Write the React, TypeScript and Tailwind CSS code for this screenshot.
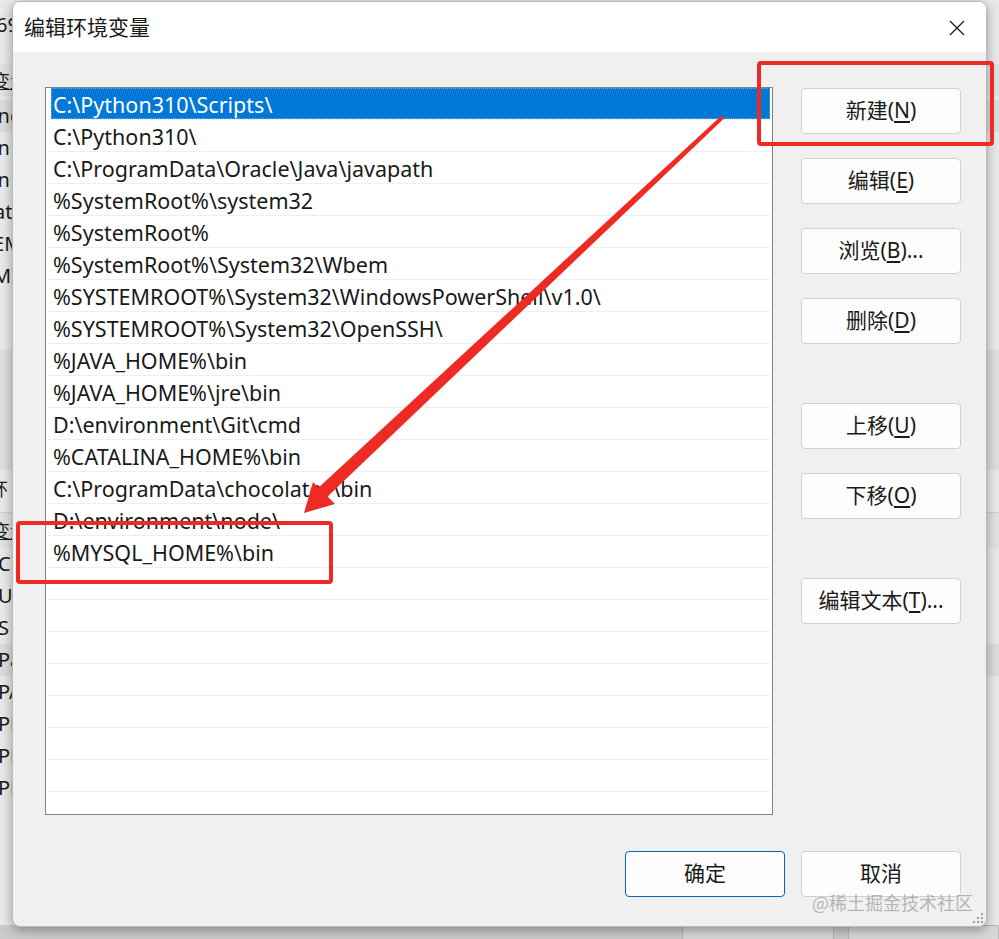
import React from "react";

const FONT = { fontFamily: '"Noto Sans", "Noto Sans CJK SC", sans-serif' };
const CJK = { fontFamily: '"Noto Sans CJK SC", sans-serif' };

const PATHS = [
  "C:\\Python310\\Scripts\\",
  "C:\\Python310\\",
  "C:\\ProgramData\\Oracle\\Java\\javapath",
  "%SystemRoot%\\system32",
  "%SystemRoot%",
  "%SystemRoot%\\System32\\Wbem",
  "%SYSTEMROOT%\\System32\\WindowsPowerShell\\v1.0\\",
  "%SYSTEMROOT%\\System32\\OpenSSH\\",
  "%JAVA_HOME%\\bin",
  "%JAVA_HOME%\\jre\\bin",
  "D:\\environment\\Git\\cmd",
  "%CATALINA_HOME%\\bin",
  "C:\\ProgramData\\chocolatey\\bin",
  "D:\\environment\\node\\",
  "%MYSQL_HOME%\\bin",
];

const ROWS = 22;

// the 环境变量 window behind the dialog, only its left edge peeks out
const BACK_TOP = ["One", "On", "On", "Pat", "TEM", "TM"];
const BACK_BOTTOM = ["C", "U", "S", "Pat", "PA", "PR", "PR", "PR"];

function Btn({ label, hot, tail = "", primary = false }: { label: string; hot?: string; tail?: string; primary?: boolean }) {
  return (
    <button
      className={`flex h-[46px] w-[160px] items-center justify-center rounded-[4px] bg-[#fdfdfd] text-[21px] text-[#1a1a1a] ${
        primary ? "border border-[#0067c0]" : "border border-[#d1d1d1]"
      }`}
      style={FONT}
    >
      {label}
      {hot && (
        <>
          (<span className="underline underline-offset-[3px]">{hot}</span>){tail}
        </>
      )}
    </button>
  );
}

function BackWindow() {
  return (
    <div className="flex h-full w-full flex-col text-[20px] text-[#1a1a1a]">
      <div className="-ml-[4px] h-[64px] pt-[10px] leading-[30px]">69</div>
      <div className="flex h-[32px] items-center bg-[#e2e2e2] -indent-[8px] text-[18px] underline" style={CJK}>变量</div>
      <div className="flex flex-col pt-[4px]">
        {BACK_TOP.map((t, i) => (
          <div key={i} className={`h-[32px] -indent-[18px] leading-[32px] ${i === 0 ? "bg-[#dcdcdc]" : ""}`}>
            {t}
          </div>
        ))}
      </div>
      <div className="mt-[58px] h-[120px] shrink-0 bg-[#dedede]" />
      <div className="h-[42px] -indent-[10px] text-[18px] leading-[36px]" style={CJK}>环</div>
      <div className="flex h-[36px] shrink-0 items-center border-t border-[#cfcfcf] bg-[#e2e2e2] -indent-[8px] text-[18px] underline" style={CJK}>
        变量
      </div>
      <div className="flex flex-col">
        {BACK_BOTTOM.map((t, i) => (
          <div key={i} className={`h-[32px] -indent-[2px] leading-[32px] ${i === 3 ? "bg-[#dcdcdc]" : ""}`}>
            {t}
          </div>
        ))}
      </div>
      <div className="mt-auto flex h-[14px] shrink-0 gap-[14px] bg-[#cbcbcb] pl-[682px]">
        <div className="h-[24px] w-[200px] rounded-[4px] border border-[#b5b5b5] bg-[#d8d8d8]" />
        <div className="h-[24px] w-[200px] rounded-[4px] border border-[#b5b5b5] bg-[#d8d8d8]" />
      </div>
    </div>
  );
}

export default function App() {
  return (
    <div className="relative h-[939px] w-[999px] overflow-hidden bg-[#e9e9e9]" style={FONT}>
      <BackWindow />

      {/* dialog */}
      <div className="absolute left-[12px] top-px flex h-[926px] w-[975px] flex-col overflow-hidden rounded-[8px] border border-[#b9b9b9] bg-[#f0f0f0] shadow-[0_3px_12px_rgba(0,0,0,0.35)]">
        <div className="flex h-[50px] shrink-0 items-center justify-between bg-white pl-[11px] pr-[20px]">
          <span className="text-[21px] text-[#1a1a1a]" style={CJK}>
            编辑环境变量
          </span>
          <svg width="18" height="18" viewBox="0 0 18 18" className="mt-[2px]">
            <path d="M2 2L16 16M16 2L2 16" stroke="#1a1a1a" strokeWidth="1.3" />
          </svg>
        </div>

        <div className="flex pl-[32px] pt-[35px]">
          <div className="h-[728px] w-[728px] overflow-hidden border border-[#828282] bg-white px-[2px]">
            {Array.from({ length: ROWS }).map((_, i) => {
              const sel = i === 0;
              return (
                <div key={i} className="h-[32px] border-b border-[#efefef]">
                  <div
                    className={`ml-[3px] flex h-[31px] items-center whitespace-nowrap pl-[2px] pt-[4px] text-[21.5px] ${
                      sel ? "bg-[#0078d7] text-white outline-1 outline-dotted -outline-offset-1 outline-[#6aa9e6]" : "text-[#1a1a1a]"
                    }`}
                  >
                    {PATHS[i]}
                  </div>
                </div>
              );
            })}
          </div>

          <div className="ml-[28px] flex flex-col pt-[1px]">
            <div className="flex flex-col gap-[24px]">
              <Btn label="新建" hot="N" />
              <Btn label="编辑" hot="E" />
              <Btn label="浏览" hot="B" tail="..." />
              <Btn label="删除" hot="D" />
            </div>
            <div className="mt-[59px] flex flex-col gap-[24px]">
              <Btn label="上移" hot="U" />
              <Btn label="下移" hot="O" />
            </div>
            <div className="mt-[59px]">
              <Btn label="编辑文本" hot="T" tail="..." />
            </div>
          </div>
        </div>

        <div className="mt-[36px] flex justify-end gap-[16px] pr-[25px]">
          <Btn label="确定" primary />
          <Btn label="取消" />
        </div>

        <div className="mt-auto flex justify-end pb-[3px] pr-[3px]">
          <div className="grid grid-cols-3 gap-[2px]">
            {[0, 0, 1, 0, 1, 1, 1, 1, 1].map((v, i) => (
              <span key={i} className={`h-[2px] w-[2px] ${v ? "bg-[#a0a0a0]" : ""}`} />
            ))}
          </div>
        </div>
      </div>

      {/* watermark */}
      <div className="absolute left-[812px] top-[889px] text-[18px] text-[#a0a0a0]/75" style={CJK}>
        @稀土掘金技术社区
      </div>

      {/* red annotations */}
      <div className="absolute left-[757px] top-[61px] h-[85px] w-[237px] rounded-[4px] border-[4px] border-[#ee2a24]" />
      <div className="absolute left-[16px] top-[521px] h-[63px] w-[317px] rounded-[4px] border-[4px] border-[#ee2a24]" />
      <svg className="pointer-events-none absolute inset-0" width="999" height="939">
        <polygon points="721.5,115.5 724,118.5 326,498 317,489" fill="#ee2a24" />
        <polygon points="304,513 313,482 335,504" fill="#ee2a24" />
      </svg>
    </div>
  );
}
